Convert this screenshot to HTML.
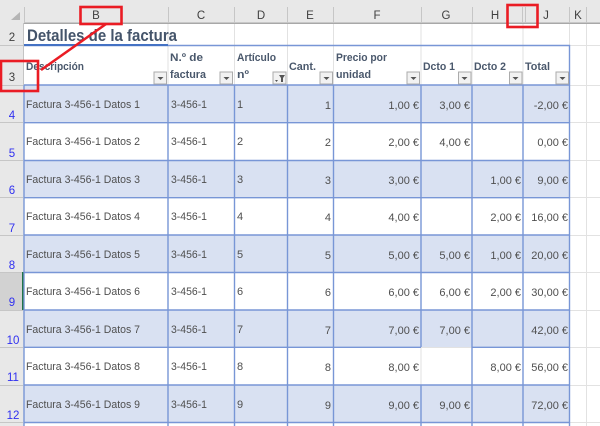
<!DOCTYPE html>
<html><head><meta charset="utf-8"><style>
html,body{margin:0;padding:0;background:#fff;overflow:hidden}
svg{display:block;filter:blur(.3px)}
text{font-family:"Liberation Sans",sans-serif;font-size:11px;fill:#4f4f4f}
.h{font-size:11.5px;fill:#3f3f3f;text-anchor:middle}
.n{font-size:11.5px;fill:#3030f0;text-anchor:middle}
.r{text-anchor:end}
.b{font-weight:bold;fill:#4a586c}
</style></head><body>
<svg width="600" height="426" viewBox="0 0 600 426" xmlns="http://www.w3.org/2000/svg">
<rect width="600" height="426" fill="#fff"/>
<!-- bands -->
<g fill="#d9e1f2">
<rect x="24" y="85" width="545" height="38"/>
<rect x="24" y="160" width="545" height="38"/>
<rect x="24" y="235" width="545" height="37"/>
<rect x="24" y="310" width="545" height="37"/>
<rect x="24" y="385" width="545" height="37"/>
</g>
<!-- sheet gridlines -->
<g stroke="#e2e2e2" stroke-width="1">
<path d="M168 23V85M234.5 23V85M287.5 23V85M333.5 23V85M421 23V85M472 23V85M523 23V85M569.5 23V45M586.5 23V426M569 45.5H600M569 85.5H600M569 122.5H600M569 160.5H600M569 197.5H600M569 235.5H600M569 272.5H600M569 310.5H600M569 347.5H600M569 385.5H600M569 422.5H600M421 347.5V385M421 347.5H472"/>
</g>
<!-- top header -->
<rect x="0" y="0" width="600" height="23" fill="#e8e8e8"/>
<rect x="0" y="22.5" width="600" height="1.5" fill="#a8a8a8"/>
<rect x="0" y="0" width="24" height="426" fill="#e8e8e8"/>
<rect x="23" y="23" width="1" height="62" fill="#c4c4c4"/>
<rect x="0" y="272" width="23" height="38" fill="#d2d2d2"/>
<path d="M20 12V20H11Z" fill="#b5b5b5"/>
<g stroke="#c6c6c6" stroke-width="1">
<path d="M24.5 7V23M168.5 7V23M234.5 7V23M287.5 7V23M333.5 7V23M421.5 7V23M472.5 7V23M522.5 7V23M525.5 7V23M569.5 7V23M586.5 7V23"/>
<path d="M0 45.5H23M0 85.5H23M0 122.5H23M0 160.5H23M0 197.5H23M0 235.5H23M0 272.5H23M0 310.5H23M0 347.5H23M0 385.5H23M0 422.5H23"/>
</g>
<g>
<text class="h" x="96" y="19">B</text>
<text class="h" x="201" y="19">C</text>
<text class="h" x="261" y="19">D</text>
<text class="h" x="310" y="19">E</text>
<text class="h" x="377" y="19">F</text>
<text class="h" x="446" y="19">G</text>
<text class="h" x="495" y="19">H</text>
<text class="h" x="546" y="19">J</text>
<text class="h" x="578" y="19">K</text>
<text class="h" x="12" y="41">2</text>
<text class="h" x="12" y="81">3</text>
<text class="n" x="12" y="119">4</text>
<text class="n" x="12" y="157">5</text>
<text class="n" x="12" y="194">6</text>
<text class="n" x="12" y="232">7</text>
<text class="n" x="12" y="269">8</text>
<text class="n" x="12" y="306">9</text>
<text class="n" x="13" y="344">10</text>
<text class="n" x="13" y="381">11</text>
<text class="n" x="13" y="419">12</text>
</g>
<rect x="22" y="272" width="2" height="38" fill="#217346"/>
<!-- table lines -->
<g stroke="#7896d6" stroke-width="1.4" fill="none">
<path d="M168 45.5H569.5V426M24 85H569.5M24 122.7H569.5M24 160.5H569.5M24 197.7H569.5M24 235H569.5M24 272.5H569.5M24 310H569.5M24 347.3H421M472 347.3H569.5M24 385H569.5M24 422.5H569.5"/>
<path d="M24 85V426M168 85V426M234.5 85V426M287.5 85V426M333.5 85V426M421 85V347M421 385V426M472 85V426M523 85V426"/>
</g>
<rect x="24" y="44" width="144" height="2.2" fill="#4472c4"/>
<!-- title & headers -->
<text x="27" y="41" class="b" style="font-size:16.5px;fill:#44546a" textLength="150" lengthAdjust="spacingAndGlyphs">Detalles de la factura</text>
<text x="26" y="70" class="b" textLength="58" lengthAdjust="spacingAndGlyphs">Descripción</text>
<text x="170" y="61" class="b" textLength="33" lengthAdjust="spacingAndGlyphs">N.º de</text>
<text x="170" y="78" class="b" textLength="36" lengthAdjust="spacingAndGlyphs">factura</text>
<text x="237" y="61" class="b" textLength="39" lengthAdjust="spacingAndGlyphs">Artículo</text>
<text x="237" y="78" class="b" textLength="12" lengthAdjust="spacingAndGlyphs">nº</text>
<text x="289" y="70" class="b" textLength="27" lengthAdjust="spacingAndGlyphs">Cant.</text>
<text x="336" y="61" class="b" textLength="51" lengthAdjust="spacingAndGlyphs">Precio por</text>
<text x="336" y="78" class="b" textLength="35" lengthAdjust="spacingAndGlyphs">unidad</text>
<text x="423" y="70" class="b" textLength="32" lengthAdjust="spacingAndGlyphs">Dcto 1</text>
<text x="474" y="70" class="b" textLength="32" lengthAdjust="spacingAndGlyphs">Dcto 2</text>
<text x="525" y="70" class="b" textLength="25" lengthAdjust="spacingAndGlyphs">Total</text>
<!-- filter buttons -->
<g fill="#f2f2f2" stroke="#ababab">
<rect x="154" y="72" width="12.5" height="12"/>
<rect x="220" y="72" width="12.5" height="12"/>
<rect x="273" y="72" width="13" height="12"/>
<rect x="320" y="72" width="12.5" height="12"/>
<rect x="407" y="72" width="12.5" height="12"/>
<rect x="458.5" y="72" width="12.5" height="12"/>
<rect x="509.5" y="72" width="12.5" height="12"/>
<rect x="556" y="72" width="12.5" height="12"/>
</g>
<g fill="#555">
<path d="M157.5 77H163.5L160.5 80Z"/>
<path d="M223.5 77H229.5L226.5 80Z"/>
<path d="M275 80H278L276.5 82ZM279 75H285L283 78V82H281V78Z"/>
<path d="M323.5 77H329.5L326.5 80Z"/>
<path d="M410.5 77H416.5L413.5 80Z"/>
<path d="M461.5 77H467.5L464.5 80Z"/>
<path d="M512.5 77H518.5L515.5 80Z"/>
<path d="M559.5 77H565.5L562.5 80Z"/>
</g>
<!-- rows -->
<g>
<text x="26" y="108" textLength="114" lengthAdjust="spacingAndGlyphs">Factura 3-456-1 Datos 1</text><text x="171" y="108" textLength="36" lengthAdjust="spacingAndGlyphs">3-456-1</text><text x="237" y="108">1</text><text class="r" x="331" y="109">1</text><text class="r" x="419" y="109">1,00 €</text><text class="r" x="470" y="109">3,00 €</text><text class="r" x="568" y="109">-2,00 €</text>
<text x="26" y="145" textLength="114" lengthAdjust="spacingAndGlyphs">Factura 3-456-1 Datos 2</text><text x="171" y="145" textLength="36" lengthAdjust="spacingAndGlyphs">3-456-1</text><text x="237" y="145">2</text><text class="r" x="331" y="146">2</text><text class="r" x="419" y="146">2,00 €</text><text class="r" x="470" y="146">4,00 €</text><text class="r" x="568" y="146">0,00 €</text>
<text x="26" y="183" textLength="114" lengthAdjust="spacingAndGlyphs">Factura 3-456-1 Datos 3</text><text x="171" y="183" textLength="36" lengthAdjust="spacingAndGlyphs">3-456-1</text><text x="237" y="183">3</text><text class="r" x="331" y="184">3</text><text class="r" x="419" y="184">3,00 €</text><text class="r" x="521" y="184">1,00 €</text><text class="r" x="568" y="184">9,00 €</text>
<text x="26" y="220" textLength="114" lengthAdjust="spacingAndGlyphs">Factura 3-456-1 Datos 4</text><text x="171" y="220" textLength="36" lengthAdjust="spacingAndGlyphs">3-456-1</text><text x="237" y="220">4</text><text class="r" x="331" y="221">4</text><text class="r" x="419" y="221">4,00 €</text><text class="r" x="521" y="221">2,00 €</text><text class="r" x="568" y="221">16,00 €</text>
<text x="26" y="258" textLength="114" lengthAdjust="spacingAndGlyphs">Factura 3-456-1 Datos 5</text><text x="171" y="258" textLength="36" lengthAdjust="spacingAndGlyphs">3-456-1</text><text x="237" y="258">5</text><text class="r" x="331" y="259">5</text><text class="r" x="419" y="259">5,00 €</text><text class="r" x="470" y="259">5,00 €</text><text class="r" x="521" y="259">1,00 €</text><text class="r" x="568" y="259">20,00 €</text>
<text x="26" y="295" textLength="114" lengthAdjust="spacingAndGlyphs">Factura 3-456-1 Datos 6</text><text x="171" y="295" textLength="36" lengthAdjust="spacingAndGlyphs">3-456-1</text><text x="237" y="295">6</text><text class="r" x="331" y="296">6</text><text class="r" x="419" y="296">6,00 €</text><text class="r" x="470" y="296">6,00 €</text><text class="r" x="521" y="296">2,00 €</text><text class="r" x="568" y="296">30,00 €</text>
<text x="26" y="333" textLength="114" lengthAdjust="spacingAndGlyphs">Factura 3-456-1 Datos 7</text><text x="171" y="333" textLength="36" lengthAdjust="spacingAndGlyphs">3-456-1</text><text x="237" y="333">7</text><text class="r" x="331" y="334">7</text><text class="r" x="419" y="334">7,00 €</text><text class="r" x="470" y="334">7,00 €</text><text class="r" x="568" y="334">42,00 €</text>
<text x="26" y="370" textLength="114" lengthAdjust="spacingAndGlyphs">Factura 3-456-1 Datos 8</text><text x="171" y="370" textLength="36" lengthAdjust="spacingAndGlyphs">3-456-1</text><text x="237" y="370">8</text><text class="r" x="331" y="371">8</text><text class="r" x="419" y="371">8,00 €</text><text class="r" x="521" y="371">8,00 €</text><text class="r" x="568" y="371">56,00 €</text>
<text x="26" y="408" textLength="114" lengthAdjust="spacingAndGlyphs">Factura 3-456-1 Datos 9</text><text x="171" y="408" textLength="36" lengthAdjust="spacingAndGlyphs">3-456-1</text><text x="237" y="408">9</text><text class="r" x="331" y="409">9</text><text class="r" x="419" y="409">9,00 €</text><text class="r" x="470" y="409">9,00 €</text><text class="r" x="568" y="409">72,00 €</text>
</g>
<!-- red annotations -->
<g fill="none" stroke="#ea1c24" stroke-width="2.6">
<rect x="80.5" y="7" width="41" height="17"/>
<rect x="1" y="61" width="37" height="30"/>
<rect x="507.5" y="5" width="30" height="22"/>
<path d="M106 24L41 70"/>
</g>
</svg>
</body></html>
